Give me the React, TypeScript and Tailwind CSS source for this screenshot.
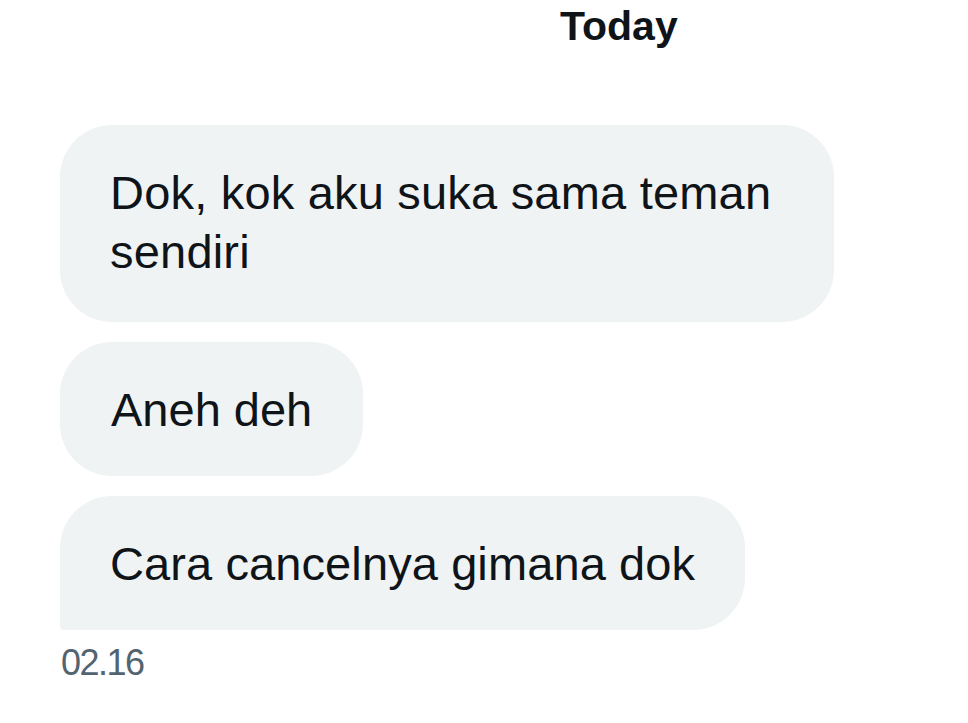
export default function App() {
  return (
    <div className="h-screen w-full bg-white font-['Liberation_Sans',Arial,sans-serif] text-[#0f1419]">
      <div className="pl-[560px] pt-[6px] text-[41px] font-bold leading-none">Today</div>

      <div className="mt-[78px] flex flex-col items-start gap-[20px] pl-[60px]">
        <div className="w-[774px] rounded-[52px] bg-[#eff3f4] px-[50px] pt-[38px] pb-[41px] text-[47px] leading-[59px] tracking-[0.2px]">
          Dok, kok aku suka sama teman sendiri
        </div>
        <div className="rounded-[52px] bg-[#eff3f4] px-[51px] pt-[38px] pb-[37px] text-[47px] leading-[59px]">
          Aneh deh
        </div>
        <div className="rounded-[52px] rounded-bl-[4px] bg-[#eff3f4] px-[50px] pt-[38px] pb-[37px] text-[47px] leading-[59px] tracking-[0.1px]">
          Cara cancelnya gimana dok
        </div>
      </div>

      <div className="mt-[15px] pl-[61px] text-[36px] leading-none tracking-[-1.5px] text-[#536471]">
        02.16
      </div>
    </div>
  );
}
